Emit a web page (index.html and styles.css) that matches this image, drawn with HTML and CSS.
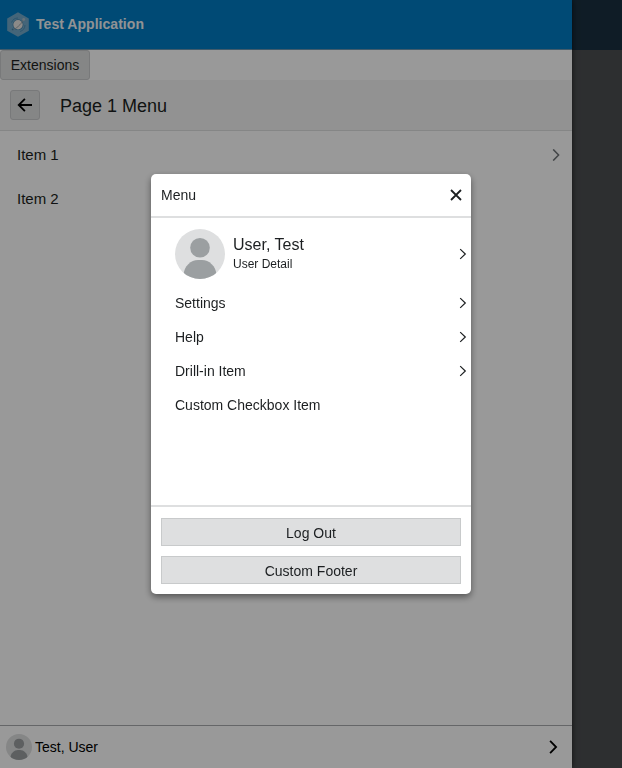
FILE: index.html
```html
<!DOCTYPE html>
<html lang="en">
<head>
<meta charset="utf-8">
<title>Test Application</title>
<link rel="stylesheet" href="styles.css">
</head>
<body>
<svg width="0" height="0" class="defs">
  <symbol id="avatar" viewBox="0 0 50 50">
    <clipPath id="round"><circle cx="25" cy="25" r="25"/></clipPath>
    <circle cx="25" cy="25" r="25" fill="#dedfe0"/>
    <g clip-path="url(#round)" fill="#9b9fa1"><circle cx="25" cy="18.700" r="9.800"/><path d="M8.500 50V46C9 37 16 31 23 31h4c7 0 14 6 14.500 15v4z"/></g>
  </symbol>
  <symbol id="chevron" viewBox="0 0 8 12"><path d="M1.200 1.100 6.300 6 1.200 10.900" fill="none" stroke="currentColor" stroke-width="1.200"/></symbol>
</svg>
<div class="app">
  <main class="panel">
    <header class="banner">
      <svg class="logo" width="22" height="25" viewBox="0 0 22 25">
        <path d="M11 .3 21.800 6.500v12.200L11 24.700 .2 18.700V6.500z" fill="#72a9ca"/>
        <path d="M4.500 10.500A7 7 0 0 1 11 6M18 13a7 7 0 0 1-5 6.500" stroke="#4b8fb9" fill="none"/>
        <circle cx="11" cy="12.700" r="5.400" fill="#4484ab"/>
        <circle cx="11" cy="12.700" r="4.700" fill="#e9e6e3"/>
        <path d="M5.500 17.800C8.500 17.500 14.500 12 16.300 8" fill="none" stroke="#8f9ba3" stroke-width=".9"/>
        <circle cx="16.700" cy="7.500" r="1.400" fill="#a9bfcb"/>
        <circle cx="5.600" cy="17.400" r=".9" fill="#4484ab"/>
      </svg>
      <span>Test Application</span>
    </header>
    <div class="extensions"><button class="ext-button">Extensions</button></div>
    <div class="page-header">
      <button class="back" aria-label="Back"><svg width="16" height="14" viewBox="0 0 16 14"><path d="M15 7H2M7.900 .8 1.700 7l6.200 6.200" fill="none" stroke="#000" stroke-width="1.800"/></svg></button>
      <h1>Page 1 Menu</h1>
    </div>
    <ul class="items">
      <li><span>Item 1</span><svg class="item-chevron" width="8" height="12" viewBox="0 0 8 12"><path d="M1.200 .4 6.600 6l-5.400 5.600" fill="none" stroke="currentColor" stroke-width="1.500"/></svg></li>
      <li><span>Item 2</span></li>
    </ul>
    <footer class="user-bar">
      <svg width="26" height="26"><use href="#avatar"/></svg>
      <span>Test, User</span>
      <svg class="bar-chevron" width="9" height="14" viewBox="0 0 9 14"><path d="M1.100 .8 7.100 7l-6 6.200" fill="none" stroke="#000" stroke-width="1.800"/></svg>
    </footer>
  </main>
  <aside class="side"><div class="side-top"></div></aside>
</div>
<div class="overlay">
  <section class="dialog">
    <header class="dialog-header"><span>Menu</span><svg width="12" height="12" viewBox="0 0 12 12"><path d="m1 1 10 10M11 1 1 11" stroke="#1c1f21" stroke-width="1.800"/></svg></header>
    <div class="dialog-body">
      <div class="profile">
        <svg width="50" height="50"><use href="#avatar"/></svg>
        <div class="profile-text"><div class="name">User, Test</div><div class="detail">User Detail</div></div>
        <svg class="chevron" width="8" height="12"><use href="#chevron"/></svg>
      </div>
      <div class="row"><span>Settings</span><svg class="chevron" width="8" height="12"><use href="#chevron"/></svg></div>
      <div class="row"><span>Help</span><svg class="chevron" width="8" height="12"><use href="#chevron"/></svg></div>
      <div class="row"><span>Drill-in Item</span><svg class="chevron" width="8" height="12"><use href="#chevron"/></svg></div>
      <div class="row"><span>Custom Checkbox Item</span></div>
    </div>
    <footer class="dialog-footer"><button>Log Out</button><button>Custom Footer</button></footer>
  </section>
</div>
</body>
</html>
```
FILE: styles.css
```css
* { box-sizing: border-box; }
body { margin: 0; color: #1c1f21; font: 14px/18px "Liberation Sans", Arial, sans-serif; overflow: hidden; }
button { margin: 0; padding: 0; font: inherit; color: inherit; }
svg { display: block; flex: none; }
.defs { position: absolute; }

.app { display: flex; height: 100vh; }
.panel { display: flex; flex-direction: column; width: 572px; background: #fff; box-shadow: 0 0 6px rgba(0, 0, 0, .65); z-index: 1; }
.side { flex: 1; background: #4c4f51; }
.side-top { height: 50px; background: #1a3040; }

.banner { display: flex; align-items: center; gap: 7px; height: 50px; padding: 0 7px; background: #007cc3; border-bottom: 1px solid #6d98b2; color: #f2f5f7; font-size: 14px; font-weight: bold; }
.banner span { padding-bottom: 2px; letter-spacing: .04px; }
.extensions { height: 30px; }
.ext-button { display: block; width: 90px; height: 30px; border: 1px solid #c8cacb; border-radius: 3px; background: #dedfe0; }
.page-header { display: flex; align-items: center; gap: 20px; height: 51px; padding: 0 10px; background: #f4f4f4; border-bottom: 1px solid #dedfe0; }
.back { display: grid; place-items: center; width: 30px; height: 30px; border: 1px solid #c8cacb; border-radius: 3px; background: #dedfe0; }
h1 { margin: 0; padding-top: 2px; font-size: 18px; font-weight: normal; line-height: 24px; }
.items { flex: 1; margin: 0; padding: 2px 0 0; list-style: none; }
.items li { display: flex; align-items: center; justify-content: space-between; height: 44px; padding: 0 12px 0 17px; font-size: 15px; }
.item-chevron { color: #6f7477; }
.user-bar { display: flex; align-items: center; height: 43px; padding: 0 14px 0 6px; border-top: 1px solid #a8abad; color: #000; }
.user-bar span { margin-left: 3px; }
.bar-chevron { margin-left: auto; }

.overlay { position: fixed; inset: 0; z-index: 2; display: grid; place-items: center; background: rgba(0, 0, 0, .4); }
.dialog { display: flex; flex-direction: column; width: 320px; height: 420px; border-radius: 5px; background: #fff; box-shadow: 0 3px 7px rgba(0, 0, 0, .45); }
.dialog-header { display: flex; align-items: center; justify-content: space-between; height: 44px; padding: 0 9px 0 10px; border-bottom: 2px solid #dedfe0; }
.dialog-body { flex: 1; padding-top: 4px; }
.profile { display: flex; align-items: center; height: 64px; padding: 0 4px 0 24px; }
.profile-text { margin-left: 8px; }
.name { font-size: 16px; line-height: 20px; }
.detail { font-size: 12px; line-height: 18px; }
.chevron { margin-left: auto; }
.row { display: flex; align-items: center; height: 34px; padding: 0 4px 0 24px; }
.dialog-footer { display: flex; flex-direction: column; gap: 10px; padding: 11px 10px 10px; border-top: 2px solid #dedfe0; }
.dialog-footer button { height: 28px; padding-top: 1px; border: 1px solid #c8cacb; background: #dedfe0; }
```
